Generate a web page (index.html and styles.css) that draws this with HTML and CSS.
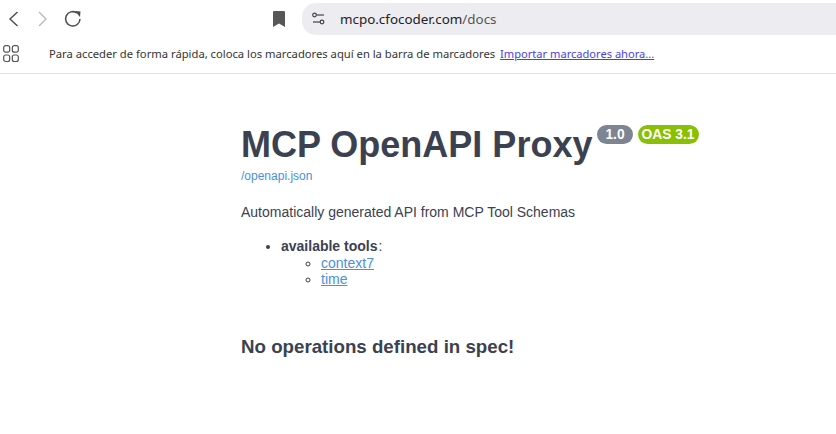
FILE: index.html
```html
<!DOCTYPE html>
<html lang="en">
<head>
    <meta charset="UTF-8">
    <meta name="viewport" content="width=device-width, initial-scale=1.0">
    <title>MCP OpenAPI Proxy</title>
    <link rel="stylesheet" href="styles.css">
</head>
<body>
    <div class="toolbar">
        <div class="nav-buttons">
            <svg class="icon" width="16" height="20" viewBox="0 0 16 20"><path d="M11.500 3 L4 10 L11.500 17" fill="none" stroke="#4a4a4d" stroke-width="1.400"/></svg>
            <svg class="icon" width="16" height="20" viewBox="0 0 16 20"><path d="M4 3 L11 10 L4 17" fill="none" stroke="#b9b9bc" stroke-width="1.400"/></svg>
            <svg class="icon" width="18" height="18" viewBox="0 0 18 18"><path d="M16 9 A7.200 7.200 0 1 1 13 3" fill="none" stroke="#4a4a4d" stroke-width="1.500"/><path d="M11 1 L16.500 1.500 L16 7 Z" fill="#4a4a4d"/></svg>
        </div>
        <svg class="bookmark" width="14" height="18" viewBox="0 0 14 18"><path d="M1 2 Q1 1 2 1 H12 Q13 1 13 2 V17 L7 13.500 L1 17 Z" fill="#57575a"/></svg>
        <div class="omnibox">
            <svg class="tune" width="16" height="14" viewBox="0 0 16 14"><circle cx="3.500" cy="3" r="1.800" fill="none" stroke="#444" stroke-width="1.200"/><path d="M5.500 3 H13" stroke="#444" stroke-width="1.200"/><circle cx="11" cy="10" r="1.800" fill="none" stroke="#444" stroke-width="1.200"/><path d="M2 10 H9" stroke="#444" stroke-width="1.200"/></svg>
            <span class="url">mcpo.cfocoder.com<span class="url-path">/docs</span></span>
        </div>
    </div>
    <div class="bookmarks-bar">
        <svg class="apps" width="16" height="18" viewBox="0 0 16 18"><rect x="0.700" y="0.700" width="6" height="6.500" rx="2" fill="none" stroke="#555" stroke-width="1.200"/><rect x="9.300" y="0.700" width="6" height="6.500" rx="2" fill="none" stroke="#555" stroke-width="1.200"/><rect x="0.700" y="10" width="6" height="6.500" rx="2" fill="none" stroke="#555" stroke-width="1.200"/><rect x="9.300" y="10" width="6" height="6.500" rx="2" fill="none" stroke="#555" stroke-width="1.200"/></svg>
        <span class="bar-text">Para acceder de forma rápida, coloca los marcadores aquí en la barra de marcadores</span>
        <a class="bar-link" href="#">Importar marcadores ahora...</a>
    </div>
    <div class="docs">
        <div class="title-row">
            <h1>MCP OpenAPI Proxy</h1>
            <span class="badge badge-version">1.0</span>
            <span class="badge badge-oas">OAS 3.1</span>
        </div>
        <a class="spec-link" href="#">/openapi.json</a>
        <p class="description">Automatically generated API from MCP Tool Schemas</p>
        <ul class="tools">
            <li><strong>available tools</strong>:
                <ul>
                    <li><a href="#">context7</a></li>
                    <li><a href="#">time</a></li>
                </ul>
            </li>
        </ul>
        <h3>No operations defined in spec!</h3>
    </div>
</body>
</html>
```

FILE: styles.css
```css
body {
    margin: 0;
    background-color: #fff;
    font-family: "Liberation Sans", Arial, sans-serif;
    overflow: hidden;
}
.toolbar {
    display: flex;
    align-items: center;
    height: 32px;
    padding-top: 3px;
}
.nav-buttons {
    display: flex;
    align-items: center;
    gap: 13px;
    width: 271px;
    padding-left: 6px;
    box-sizing: border-box;
}
.bookmark {
    margin-left: 1px;
}
.omnibox {
    display: flex;
    align-items: center;
    flex: 1;
    height: 32px;
    margin-left: 16px;
    padding-left: 9px;
    background-color: #edecf1;
    border-radius: 14px 0 0 14px;
}
.url {
    margin-left: 13px;
    font-family: "Noto Sans", sans-serif;
    font-size: 13.400px;
    color: #222;
}
.url-path {
    color: #555;
}
.bookmarks-bar {
    display: flex;
    align-items: center;
    height: 38px;
    padding-left: 3px;
    border-bottom: 1px solid #e3e3e3;
    font-family: "Noto Sans", sans-serif;
    font-size: 11.220px;
    color: #333;
}
.bar-text {
    margin: 0 0 2px 30px;
}
.bar-link {
    margin: 0 0 2px 5px;
    color: #4a3cf0;
    font-size: 11.100px;
}
.docs {
    padding-left: 241px;
    color: #3b4151;
}
.title-row {
    display: flex;
    align-items: flex-start;
    padding-top: 50px;
}
h1 {
    margin: 0;
    font-size: 36px;
    line-height: 42px;
}
.badge {
    margin-top: 1px;
    padding: 0 4px;
    border-radius: 57px;
    color: #fff;
    font-size: 13.800px;
    font-weight: bold;
    line-height: 19px;
}
.badge-version {
    margin-left: 5px;
    padding: 0 8px;
    background-color: #7d8492;
}
.badge-oas {
    margin-left: 5px;
    background-color: #89bf04;
}
.spec-link {
    display: block;
    margin-top: 3px;
    font-size: 12px;
    color: #4990e2;
    text-decoration: none;
}
.description {
    margin: 19px 0 0;
    font-size: 14px;
    line-height: 20px;
}
.tools {
    margin: 16px 0 0;
    padding-left: 40px;
    font-size: 14px;
    line-height: 16px;
}
.tools strong {
    padding-right: 1px;
}
.tools ul {
    margin: 1px 0 0;
    padding-left: 40px;
}
.tools a {
    color: #4990e2;
}
h3 {
    margin: 48px 0 0;
    font-size: 18.720px;
    line-height: 24px;
}
```
